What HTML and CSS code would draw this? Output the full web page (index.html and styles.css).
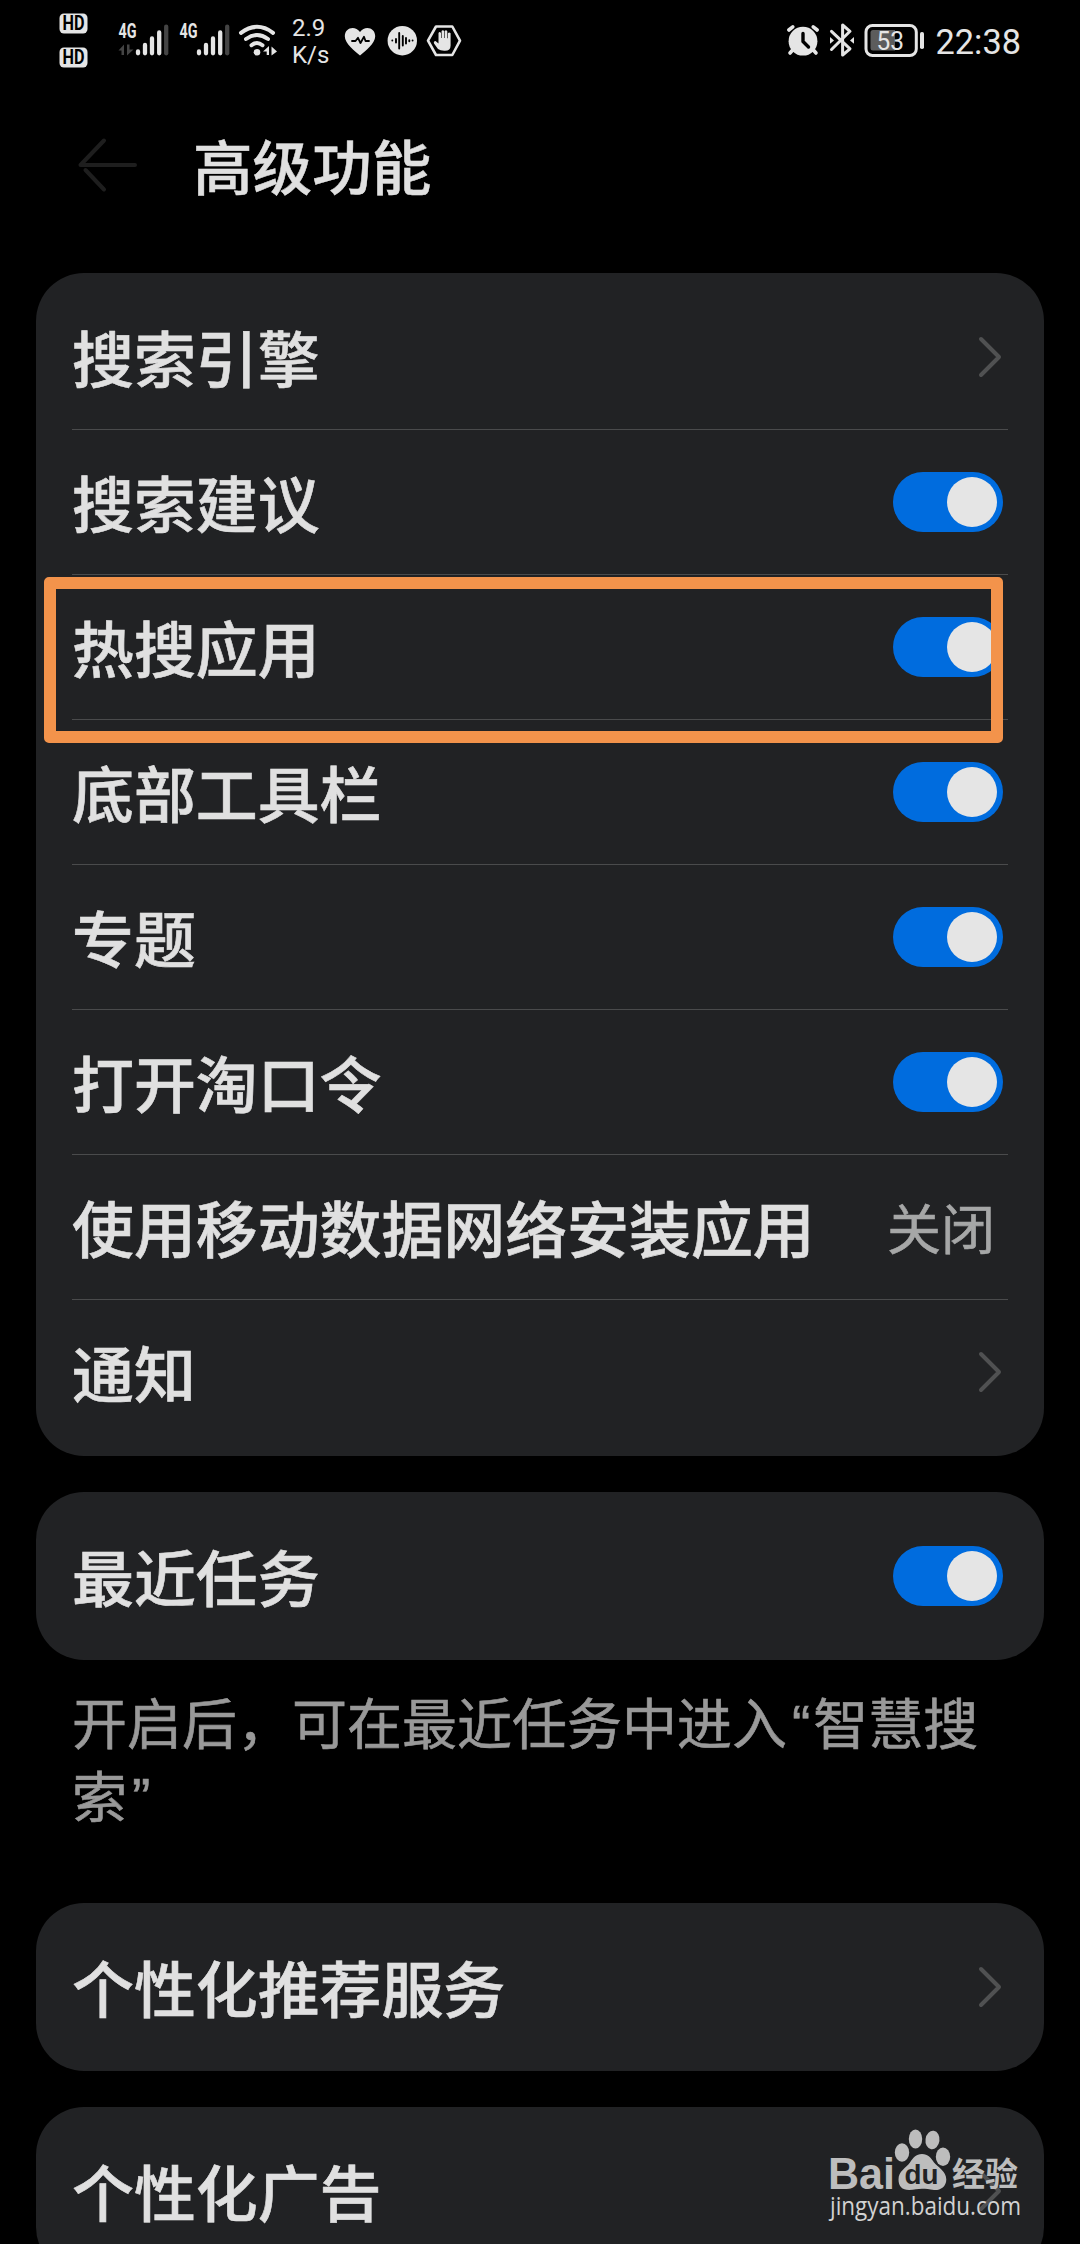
FILE: index.html
```
<!DOCTYPE html>
<html lang="zh-CN">
  <head>
    <meta charset="UTF-8" />
    <meta name="viewport" content="width=device-width, initial-scale=1.0" />
    <title>高级功能</title>
    <link rel="stylesheet" href="styles.css">
  </head>
  <body>
    <!-- Shared icons -->
    <svg class="sprite" width="0" height="0">
      <symbol id="chevron" viewBox="0 0 26 44">
        <path d="M4 4 L22 22 L4 40" fill="none" stroke="#505152" stroke-width="4" stroke-linecap="round" stroke-linejoin="round" />
      </symbol>
    </svg>

    <div class="status-bar">
      <!-- HD badges, signal and wifi -->
      <svg class="status-icons" width="235" height="90" viewBox="50 0 235 90">
        <rect x="59.5" y="13.5" width="28" height="20" rx="4.5" />
        <rect x="59.5" y="47.5" width="28" height="20" rx="4.5" />
        <text class="hd" x="62.5" y="30" textLength="22" lengthAdjust="spacingAndGlyphs">HD</text>
        <text class="hd" x="62.5" y="64" textLength="22" lengthAdjust="spacingAndGlyphs">HD</text>

        <text class="net" x="118.5" y="38.3" textLength="18" lengthAdjust="spacingAndGlyphs">4G</text>
        <path class="dim-fill" d="M118.5 50.5 L124 44.5 V55 H121.5 V50.5Z M127 44.5 H129.5 V49.5 H133.5 L127 55.5Z" />
        <g class="bars">
          <path d="M138 51.5 V53.3 M145 45 V53.3 M152 38.5 V53.3 M159.2 32.5 V53.3" />
          <path class="dim" d="M166.2 26.7 V53.3" />
        </g>

        <text class="net" x="179.5" y="38.3" textLength="18" lengthAdjust="spacingAndGlyphs">4G</text>
        <g class="bars">
          <path d="M199 51.5 V53.3 M206 45 V53.3 M213 38.5 V53.3 M220.2 32.5 V53.3" />
          <path class="dim" d="M227.2 26.7 V53.3" />
        </g>

        <path class="line" d="M241 32.8 Q257 20.8 273 32.8 M246 39 Q257 31 268 39 M251.5 45.2 Q257 40.8 262.5 45.2" stroke-width="4" />
        <circle cx="257" cy="52.2" r="3.3" />
        <path d="M263 51.5 L269 46 V55 H266.7 V51.5Z M271.5 46.5 L277 51.5 L271.5 55.5Z" />
      </svg>

      <div class="net-speed">
        <span>2.9</span>
        <span>K/s</span>
      </div>

      <svg class="status-icons" width="130" height="90" viewBox="340 0 130 90">
        <path d="M360 55.5 C355 51.5 344.8 43.5 344.8 36.3 C344.8 27.5 355 25 360 32 C365 25 375.2 27.5 375.2 36.3 C375.2 43.5 365 51.5 360 55.5Z" />
        <path class="cut" d="M352 41 H355.5 L358 37.8 L360.5 43 L364 36.7 L365.5 41 H369" stroke-width="1.8" />
        <circle cx="402.3" cy="40.7" r="14.7" />
        <path class="cut" d="M392.3 40.5 V40.6 M396 39 V42.5 M399.2 33 V48.5 M402.8 36 V45.5 M406 38 V43.5 M409.3 40.2 V41.2 M412.6 40.5 V40.6" stroke-width="1.9" />
        <path class="line" d="M428 40.7 L436 26.5 H452.3 L460 40.7 L452.3 55 H436Z" stroke-width="2.6" />
        <path d="M438 49 L434 43.5 Q433.3 41 435.5 41 L438.5 43.5 V33 Q439.6 31.2 441 33 V38 H441.6 V31 Q442.8 29.3 444.2 31 V38 H444.8 V31 Q446 29.6 447.3 31.2 V38.3 H447.9 V33.3 Q449.2 31.8 450.6 33.3 V45.5 Q450.6 50.8 445 50.8 Q440.5 51 438 49Z" />
      </svg>

      <div class="status-spacer"></div>

      <svg class="status-icons" width="250" height="90" viewBox="780 0 250 90">
        <circle cx="803" cy="41.2" r="14.4" />
        <path class="line" d="M788.8 30 L792.8 26.8 M817.2 30 L813.2 26.8 M793.5 49 L790 53 M812.5 49 L816 53" stroke-width="3.6" />
        <path class="cut" d="M803 33.5 V41.5 L808.5 47" stroke-width="3.4" />

        <path class="line" d="M831.5 31.3 L850 48.8 L842.6 55 V25 L850 31.3 L831.5 49.5" stroke-width="3" />
        <path d="M830 37 L834 40.4 L830 43.8Z M854 37 L850 40.4 L854 43.8Z" />

        <rect x="866" y="25.5" width="50.3" height="30" rx="6.5" fill="none" stroke="#e5e5e5" stroke-width="3" />
        <path class="battery-level" d="M873 30 H895 V50.5 H873 Q870.5 50.5 870.5 48 V32.5 Q870.5 30 873 30Z" />
        <rect x="920" y="32" width="4" height="17" rx="1.8" />
        <text class="battery-text" x="876.5" y="50" textLength="27.5" lengthAdjust="spacingAndGlyphs">53</text>
        <text class="clock" x="935.5" y="54" textLength="85.5" lengthAdjust="spacingAndGlyphs">22:38</text>
      </svg>
    </div>

    <header class="title-bar">
      <svg class="back" width="64" height="60" viewBox="0 0 64 60">
        <path d="M60 30 H5.5 L29 5.5 M10.5 35 L29 54.5" fill="none" stroke="#1e1e1e" stroke-width="4" stroke-linecap="round" stroke-linejoin="round" />
      </svg>
      <h1>高级功能</h1>
    </header>

    <main>
      <section class="card">
        <div class="row">
          <span class="label">搜索引擎</span>
          <svg class="chevron"><use href="#chevron" /></svg>
        </div>
        <div class="row">
          <span class="label">搜索建议</span>
          <span class="switch"></span>
        </div>
        <div class="row">
          <span class="label">热搜应用</span>
          <span class="switch"></span>
        </div>
        <div class="row">
          <span class="label">底部工具栏</span>
          <span class="switch"></span>
        </div>
        <div class="row">
          <span class="label">专题</span>
          <span class="switch"></span>
        </div>
        <div class="row">
          <span class="label">打开淘口令</span>
          <span class="switch"></span>
        </div>
        <div class="row">
          <span class="label">使用移动数据网络安装应用</span>
          <span class="value">关闭</span>
        </div>
        <div class="row">
          <span class="label">通知</span>
          <svg class="chevron"><use href="#chevron" /></svg>
        </div>
        <div class="highlight"></div>
      </section>

      <section class="card">
        <div class="row">
          <span class="label">最近任务</span>
          <span class="switch"></span>
        </div>
      </section>
      <p class="hint">开启后，可在最近任务中进入<span class="quote">“</span>智慧搜索<span class="quote">”</span></p>

      <section class="card">
        <div class="row">
          <span class="label">个性化推荐服务</span>
          <svg class="chevron"><use href="#chevron" /></svg>
        </div>
      </section>

      <section class="card">
        <div class="row">
          <span class="label">个性化广告</span>
          <svg class="chevron"><use href="#chevron" /></svg>
        </div>
      </section>
    </main>

    <!-- Watermark -->
    <svg class="watermark" width="210" height="120" viewBox="820 2120 210 120">
      <g class="logo">
        <ellipse cx="902" cy="2152.5" rx="7.2" ry="9.3" />
        <ellipse cx="915.5" cy="2139" rx="6.7" ry="9.5" />
        <ellipse cx="932.5" cy="2140" rx="7" ry="9.3" transform="rotate(8 932.5 2140)" />
        <ellipse cx="943" cy="2156.7" rx="7.2" ry="9.2" />
        <path d="M922 2154 C928 2154 931 2158 934 2162.5 C938 2167.5 946.3 2171 946.3 2179.5 C946.3 2187 940 2190.5 934 2190 C929 2189.3 926 2188.8 922 2188.8 C918 2188.8 914 2190 909 2190 C902 2190 898.5 2186 898.5 2179.5 C898.5 2171 906 2168 910 2162.5 C913 2158 916 2154 922 2154Z" />
        <text class="logo-bai" x="828" y="2188.5" textLength="67" lengthAdjust="spacingAndGlyphs">Bai</text>
        <text class="logo-du" x="904.5" y="2184" textLength="34" lengthAdjust="spacingAndGlyphs">du</text>
        <text class="logo-cn" x="952" y="2185.5" textLength="66" lengthAdjust="spacingAndGlyphs">经验</text>
      </g>
      <text class="site" x="830" y="2214.5" textLength="191" lengthAdjust="spacingAndGlyphs">jingyan.baidu.com</text>
    </svg>
  </body>
</html>
```
FILE: styles.css
```
:root {
  --card: #212224;
  --text: #e0e0e0;
  --text-dim: #999999;
  --divider: #4a4b4c;
  --accent: #006cde;
  --icon: #e5e5e5;
}

* {
  margin: 0;
  padding: 0;
  box-sizing: border-box;
}

body {
  position: relative;
  width: 1080px;
  height: 2244px;
  overflow: hidden;
  background: #000;
  color: var(--text);
  font-family: "Noto Sans CJK SC", sans-serif;
}

.sprite {
  display: block;
}

/* Status bar */
.status-bar {
  display: flex;
  height: 90px;
  padding: 0 50px;
  font-family: Roboto, sans-serif;
}

.status-icons {
  flex: none;
  fill: var(--icon);
}

.status-spacer {
  flex: 1;
}

.hd {
  fill: #000;
  font-size: 19.5px;
  font-weight: 700;
}

.net {
  font-size: 20px;
  font-weight: 700;
}

.bars path {
  stroke: var(--icon);
  stroke-width: 4.3;
  stroke-linecap: round;
}

.bars .dim {
  stroke: #444;
}

.dim-fill {
  fill: #444;
}

.line {
  fill: none;
  stroke: var(--icon);
  stroke-linecap: round;
  stroke-linejoin: round;
}

.cut {
  fill: none;
  stroke: #000;
  stroke-linecap: round;
  stroke-linejoin: round;
}

.net-speed {
  display: flex;
  flex-direction: column;
  width: 55px;
  padding: 15px 0 0 7px;
  font-size: 24px;
  line-height: 27px;
  color: var(--icon);
}

.battery-level {
  fill: #5c5c5c;
}

.battery-text {
  font-size: 26px;
}

.clock {
  font-size: 35px;
}

/* Title */
.title-bar {
  display: flex;
  align-items: center;
  height: 150px;
  padding-left: 75px;
}

.back {
  flex: none;
}

h1 {
  margin: -2px 0 0 54px;
  font-size: 59.6px;
  font-weight: 500;
  line-height: 80px;
  -webkit-text-stroke: 0.5px var(--text);
}

/* Cards */
main {
  display: flex;
  flex-direction: column;
  gap: 36px;
  padding: 33px 36px 0;
}

.card {
  position: relative;
  padding: 12px 36px;
  border-radius: 48px;
  background: var(--card);
}

.row {
  display: flex;
  align-items: center;
  justify-content: space-between;
  height: 144px;
}

.row + .row {
  height: 145px;
  border-top: 1px solid var(--divider);
}

.label {
  margin-top: -2px;
  font-size: 61.9px;
  font-weight: 500;
  line-height: 84px;
  white-space: nowrap;
  -webkit-text-stroke: 0.6px var(--text);
}

.value {
  margin: -1px 13px 0 0;
  color: #a6a7a7;
  font-size: 54px;
  -webkit-text-stroke: 0.6px #a6a7a7;
}

.chevron {
  width: 26px;
  height: 44px;
  margin-right: 5px;
}

.switch {
  display: flex;
  justify-content: flex-end;
  width: 110px;
  height: 60px;
  margin-right: 5px;
  padding: 5px 6px;
  border-radius: 30px;
  background: var(--accent);
}

.switch::after {
  content: "";
  width: 50px;
  height: 50px;
  border-radius: 50%;
  background: var(--icon);
}

.highlight {
  position: absolute;
  top: 304px;
  left: 8px;
  width: 959px;
  height: 166px;
  border: 12px solid #f3934b;
  border-radius: 5px;
}

.hint {
  height: 171px;
  margin-top: -10px;
  margin-bottom: 10px;
  padding: 0 36px;
  color: var(--text-dim);
  font-family: "Noto Sans", "Noto Sans CJK SC", sans-serif;
  font-size: 55px;
  line-height: 73px;
  -webkit-text-stroke: 0.6px var(--text-dim);
}

.quote {
  margin: 0 3px 0 5px;
  font-family: "Liberation Sans", sans-serif;
  line-height: 1;
}

/* Watermark */
.watermark {
  position: absolute;
  top: 2120px;
  left: 820px;
}

.logo {
  fill: #bdbdbd;
}

.logo-bai {
  font-family: "Liberation Sans", sans-serif;
  font-size: 45px;
  font-weight: 700;
}

.logo-du {
  fill: var(--card);
  font-family: "Liberation Sans", sans-serif;
  font-size: 28px;
  font-weight: 700;
}

.logo-cn {
  font-size: 33px;
  font-weight: 700;
}

.site {
  fill: #d2d2d2;
  font-family: "Open Sans", sans-serif;
  font-size: 25px;
}
```
